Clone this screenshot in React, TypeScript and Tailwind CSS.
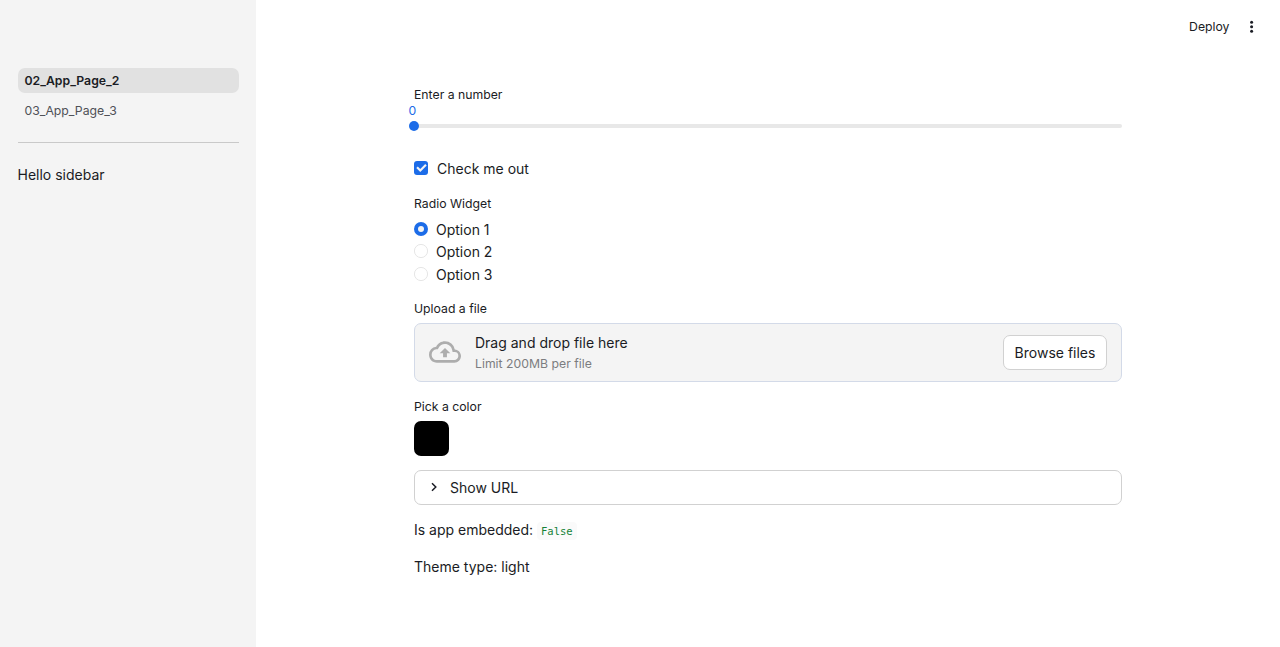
import { useState } from "react";

const pages = ["02_App_Page_2", "03_App_Page_3"];
const options = ["Option 1", "Option 2", "Option 3"];

function Label({ children }: { children: string }) {
  return <div className="h-5 text-[12.25px] leading-5">{children}</div>;
}

function Sidebar() {
  return (
    <aside className="w-64 shrink-0 bg-[#f4f4f4] px-[17.5px] pt-[68px]">
      <nav className="flex flex-col gap-[5px]">
        {pages.map((page, i) => (
          <a
            key={page}
            className={
              i === 0
                ? "h-[25px] rounded-[7px] bg-[#e1e1e1] px-[7px] text-[12.25px] leading-[26px] font-semibold"
                : "h-[25px] rounded-[7px] px-[7px] text-[12.25px] leading-[26px] text-[#4f5157]"
            }
          >
            {page}
          </a>
        ))}
      </nav>
      <div className="mt-[19px] h-px bg-[#c9c9c9]" />
      <p className="mt-[21px] text-[14px] leading-[22px]">Hello sidebar</p>
    </aside>
  );
}

function CheckBox({ checked, onClick }: { checked: boolean; onClick: () => void }) {
  return (
    <button onClick={onClick} className="mt-[26px] flex h-[22px] items-start gap-[9px]">
      <span className="mt-1 flex size-[14px] items-center justify-center rounded-[3px] bg-[#1c6ce8]">
        {checked && (
          <svg viewBox="0 0 17 13" className="h-[8px] w-[11px]">
            <path d="M6.5 13 0 6.5 2.5 4 6.5 8 14.5 0 17 2.5Z" fill="#f4f4f4" />
          </svg>
        )}
      </span>
      <span className="text-[14px] leading-6">Check me out</span>
    </button>
  );
}

function RadioMark({ selected }: { selected: boolean }) {
  return (
    <svg viewBox="0 0 14 14" className="size-[14px]">
      {selected ? (
        <>
          <circle cx="7" cy="7" r="7" fill="#1c6ce8" />
          <circle cx="7" cy="7" r="3" fill="#f4f4f4" />
        </>
      ) : (
        <circle cx="7" cy="7" r="6.6" fill="white" stroke="#e0e0e0" strokeWidth="0.8" />
      )}
    </svg>
  );
}

export default function App() {
  const [checked, setChecked] = useState(true);
  const [selected, setSelected] = useState(0);

  return (
    <div className="flex h-[647px] overflow-hidden bg-white font-['Inter',sans-serif] text-[#1a1c24]">
      <Sidebar />
      <div className="flex flex-1 flex-col">
        <header className="flex h-[53px] shrink-0 items-center justify-end gap-[14px] pr-[20.5px] text-[12.25px]">
          <span className="pt-[2px]">Deploy</span>
          <svg viewBox="0 0 16 16" className="size-4" fill="#1a1c24">
            <circle cx="7.6" cy="3.2" r="1.5" />
            <circle cx="7.6" cy="7.7" r="1.5" />
            <circle cx="7.6" cy="12.2" r="1.5" />
          </svg>
        </header>

        <main className="mx-auto flex w-[708px] flex-col pt-8">
          <Label>Enter a number</Label>
          <div className="-ml-[5.4px] h-3 text-[12.25px] leading-3 text-[#1c6ce8]">0</div>
          <div className="mt-1 flex h-[10px] items-center">
            <span className="-ml-[5px] size-[10px] rounded-full bg-[#1c6ce8]" />
            <span className="h-1 flex-1 rounded-r-full bg-[#e8e8e8]" />
          </div>

          <CheckBox checked={checked} onClick={() => setChecked(!checked)} />

          <div className="mt-[15px]">
            <Label>Radio Widget</Label>
          </div>
          <div className="mt-1 flex flex-col">
            {options.map((option, i) => (
              <button
                key={option}
                onClick={() => setSelected(i)}
                className={
                  i === 0
                    ? "flex h-[22px] items-start gap-2 pt-1 text-[14px]"
                    : "flex h-[23px] items-start gap-2 pt-1 text-[14px]"
                }
              >
                <RadioMark selected={selected === i} />
                <span className={i === 1 ? "leading-[15px]" : "leading-4"}>{option}</span>
              </button>
            ))}
          </div>

          <div className="mt-[13px]">
            <Label>Upload a file</Label>
          </div>
          <section className="mt-1 flex h-[59px] items-center rounded-[7px] border border-[#d3dae8] bg-[#f4f4f4] px-[14px]">
            <svg viewBox="0 0 24 24" className="mb-px size-8" fill="#adadad">
              <path d="M19.35 10.04A7.49 7.49 0 0 0 12 4C9.11 4 6.6 5.64 5.35 8.04A5.994 5.994 0 0 0 0 14c0 3.31 2.69 6 6 6h13c2.76 0 5-2.24 5-5 0-2.64-2.05-4.78-4.65-4.96zM19 18H6c-2.21 0-4-1.79-4-4 0-2.05 1.53-3.76 3.56-3.97l1.07-.11.5-.95A5.469 5.469 0 0 1 12 6c2.62 0 4.88 1.86 5.39 4.43l.3 1.5 1.53.11A2.98 2.98 0 0 1 22 15c0 1.65-1.35 3-3 3zM8 13h2.55v3h2.9v-3H16l-4-4z" />
            </svg>
            <div className="ml-[14px] flex-1 pt-px">
              <div className="text-[14px] leading-[22px]">Drag and drop file here</div>
              <div className="text-[12.25px] leading-5 text-[#7c7d80]">Limit 200MB per file</div>
            </div>
            <button className="h-[35px] w-[104px] rounded-[7px] border border-[#d1d1d1] bg-white text-[14px]">
              Browse files
            </button>
          </section>

          <div className="mt-[15px]">
            <Label>Pick a color</Label>
          </div>
          <div className="mt-1 size-[35px] rounded-[7px] bg-black" />

          <button className="mt-[14px] flex h-[35px] items-center rounded-[7px] border border-[#d1d1d1] pl-[12px] text-[14px]">
            <svg viewBox="0 0 14 14" className="mr-[9px] mb-px size-[14px]" fill="none" stroke="#1a1c24" strokeWidth="1.5">
              <path d="M5 3.2 8.8 7 5 10.8" />
            </svg>
            Show URL
          </button>

          <p className="mt-[14px] text-[14px] leading-[22px]">
            Is app embedded:{" "}
            <code className="rounded-[4px] bg-[#fafafa] px-1 py-[3px] font-['DejaVu_Sans_Mono',monospace] text-[10.5px] text-[#158237]">
              False
            </code>
          </p>
          <p className="mt-[14px] text-[14px] leading-[22px]">Theme type: light</p>
        </main>
      </div>
    </div>
  );
}
